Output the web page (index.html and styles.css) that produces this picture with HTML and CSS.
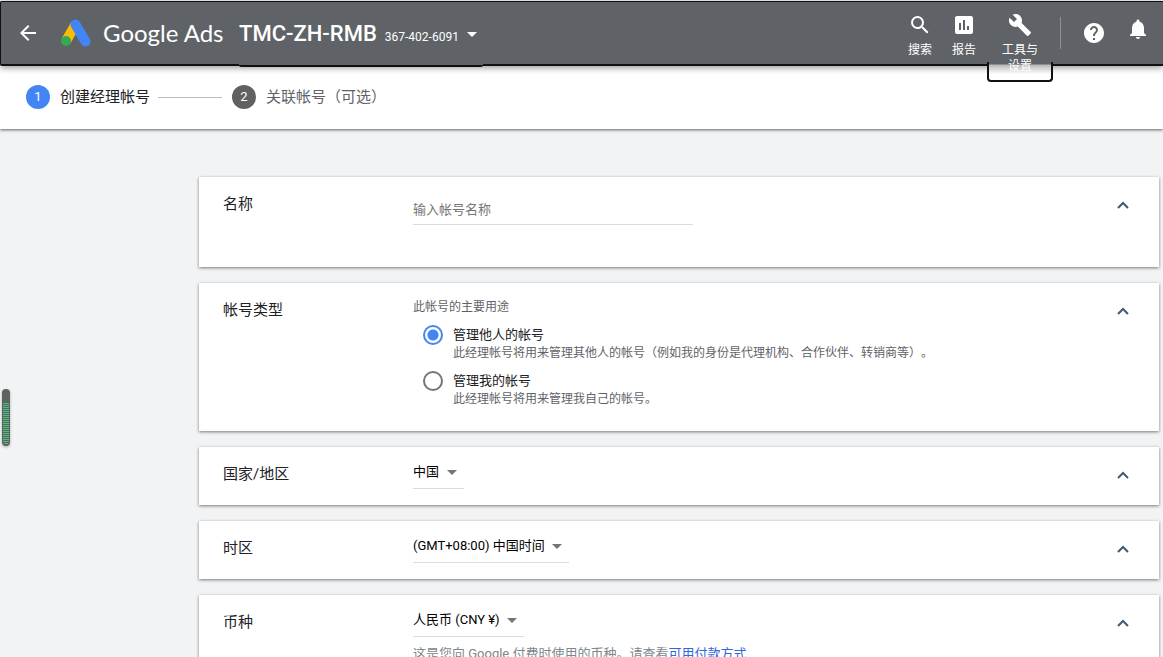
FILE: index.html
```html
<!DOCTYPE html>
<html lang="zh-CN">
<head>
<meta charset="utf-8">
<meta name="viewport" content="width=device-width, initial-scale=1">
<title>Google Ads</title>
<link rel="stylesheet" href="styles.css">
</head>
<body>
<div class="app">
  <header class="topbar">
    <button class="icon-button back" aria-label="返回">
      <svg width="24" height="24" viewBox="0 0 24 24"><path fill="currentColor" d="M20 11H7.800l5.600-5.600L12 4l-8 8 8 8 1.400-1.400L7.800 13H20z"/></svg>
    </button>
    <svg class="logo" width="32" height="28" viewBox="0 0 32 28" aria-hidden="true">
      <path d="M15.500 5.500L6 22" stroke="#fbbc04" stroke-width="10" fill="none"/>
      <path d="M15.500 5.500L25.500 22.500" stroke="#4285f4" stroke-width="10" stroke-linecap="round" fill="none"/>
      <circle cx="6" cy="22" r="5" fill="#34a853"/>
    </svg>
    <span class="brand">Google Ads</span>
    <button class="account">
      <span class="account-name">TMC-ZH-RMB</span>
      <span class="account-id">367-402-6091</span>
      <svg width="10" height="5" viewBox="0 0 10 5" aria-hidden="true"><path fill="currentColor" d="M0 0h10L5 5z"/></svg>
    </button>
    <nav class="tools">
      <button class="tool">
        <svg width="24" height="24" viewBox="0 0 24 24"><path fill="currentColor" d="M15.500 14h-.79l-.28-.27A6.470 6.470 0 0 0 16 9.500 6.500 6.500 0 1 0 9.500 16c1.610 0 3.090-.59 4.230-1.570l.27.28v.79l5 4.990L20.490 19l-4.990-5zm-6 0C7.010 14 5 11.990 5 9.500S7.010 5 9.500 5 14 7.010 14 9.500 11.990 14 9.500 14z"/></svg>
        <span>搜索</span>
      </button>
      <button class="tool">
        <svg width="24" height="24" viewBox="0 0 24 24"><path fill="currentColor" d="M19 3H5c-1.100 0-2 .9-2 2v14c0 1.100.9 2 2 2h14c1.100 0 2-.9 2-2V5c0-1.100-.9-2-2-2zM9 17H7v-7h2v7zm4 0h-2V7h2v10zm4 0h-2v-4h2v4z"/></svg>
        <span>报告</span>
      </button>
      <button class="tool tool-focused">
        <svg width="24" height="24" viewBox="0 0 24 24"><path fill="currentColor" d="M22.700 19l-9.100-9.100c.9-2.300.4-5-1.500-6.900-2-2-5-2.400-7.400-1.300L9 6 6 9 1.600 4.700C.4 7.100.9 10.100 2.900 12.100c1.900 1.900 4.600 2.400 6.900 1.500l9.100 9.100c.4.4 1 .4 1.400 0l2.300-2.300c.5-.4.5-1.100.1-1.400z"/></svg>
        <span>工具与<br>设置</span>
      </button>
    </nav>
    <span class="divider"></span>
    <button class="icon-button help" aria-label="帮助">
      <svg width="24" height="24" viewBox="0 0 24 24"><path fill="currentColor" d="M12 2C6.480 2 2 6.480 2 12s4.480 10 10 10 10-4.480 10-10S17.520 2 12 2zm1 17h-2v-2h2v2zm2.070-7.750l-.9.920C13.450 12.900 13 13.500 13 15h-2v-.5c0-1.100.45-2.100 1.170-2.830l1.240-1.260c.37-.36.59-.86.59-1.410 0-1.100-.9-2-2-2s-2 .9-2 2H8c0-2.210 1.790-4 4-4s4 1.790 4 4c0 .88-.36 1.680-.93 2.250z"/></svg>
    </button>
    <button class="icon-button bell" aria-label="通知">
      <svg width="24" height="24" viewBox="0 0 24 24"><path fill="currentColor" d="M12 22c1.100 0 2-.9 2-2h-4c0 1.100.9 2 2 2zm6-6v-5c0-3.070-1.640-5.640-4.500-6.320V4c0-.83-.67-1.500-1.500-1.500s-1.500.67-1.500 1.500v.68C7.630 5.360 6 7.920 6 11v5l-2 2v1h16v-1l-2-2z"/></svg>
    </button>
  </header>

  <ol class="steps">
    <li class="step step-current"><span class="step-number">1</span><span>创建经理帐号</span></li>
    <li class="step-line" aria-hidden="true"></li>
    <li class="step"><span class="step-number">2</span><span>关联帐号（可选）</span></li>
  </ol>

  <main class="content">
    <section class="card card-name">
      <h2 class="card-title"><label for="name">名称</label></h2>
      <div class="card-body">
        <input class="text-input" id="name" type="text" placeholder="输入帐号名称">
      </div>
      <button class="collapse" aria-label="收起"><svg width="12" height="8" viewBox="0 0 12 8"><path d="M1 7l5-5 5 5"/></svg></button>
    </section>

    <section class="card card-type">
      <h2 class="card-title">帐号类型</h2>
      <div class="card-body" role="radiogroup" aria-labelledby="purpose">
        <p class="caption" id="purpose">此帐号的主要用途</p>
        <label class="option">
          <input class="radio" type="radio" name="purpose" checked>
          <span class="option-text"><span class="option-title">管理他人的帐号</span><span class="option-desc">此经理帐号将用来管理其他人的帐号（例如我的身份是代理机构、合作伙伴、转销商等）。</span></span>
        </label>
        <label class="option">
          <input class="radio" type="radio" name="purpose">
          <span class="option-text"><span class="option-title">管理我的帐号</span><span class="option-desc">此经理帐号将用来管理我自己的帐号。</span></span>
        </label>
      </div>
      <button class="collapse" aria-label="收起"><svg width="12" height="8" viewBox="0 0 12 8"><path d="M1 7l5-5 5 5"/></svg></button>
    </section>

    <section class="card">
      <h2 class="card-title"><label for="country">国家/地区</label></h2>
      <div class="card-body">
        <div class="select-box">
          <select id="country"><option>中国</option></select>
          <svg class="caret" width="10" height="5" viewBox="0 0 10 5"><path d="M0 0h10L5 5z"/></svg>
        </div>
      </div>
      <button class="collapse" aria-label="收起"><svg width="12" height="8" viewBox="0 0 12 8"><path d="M1 7l5-5 5 5"/></svg></button>
    </section>

    <section class="card">
      <h2 class="card-title"><label for="zone">时区</label></h2>
      <div class="card-body">
        <div class="select-box">
          <select id="zone"><option>(GMT+08:00) 中国时间</option></select>
          <svg class="caret" width="10" height="5" viewBox="0 0 10 5"><path d="M0 0h10L5 5z"/></svg>
        </div>
      </div>
      <button class="collapse" aria-label="收起"><svg width="12" height="8" viewBox="0 0 12 8"><path d="M1 7l5-5 5 5"/></svg></button>
    </section>

    <section class="card">
      <h2 class="card-title"><label for="currency">币种</label></h2>
      <div class="card-body">
        <div class="select-box">
          <select id="currency"><option>人民币 (CNY ¥)</option></select>
          <svg class="caret" width="10" height="5" viewBox="0 0 10 5"><path d="M0 0h10L5 5z"/></svg>
        </div>
        <p class="hint">这是您向 Google 付费时使用的币种。请查看<a href="#">可用付款方式</a></p>
      </div>
      <button class="collapse" aria-label="收起"><svg width="12" height="8" viewBox="0 0 12 8"><path d="M1 7l5-5 5 5"/></svg></button>
    </section>
  </main>
  <div class="level-meter" aria-hidden="true"></div>
</div>
</body>
</html>
```

FILE: styles.css
```css
* {
  box-sizing: border-box;
}

body {
  margin: 0;
  background: #f1f3f4;
  color: #202124;
  font-family: Roboto, "Noto Sans CJK SC", sans-serif;
  font-size: 13px;
  text-spacing-trim: space-all;
}

button,
input,
select {
  font: inherit;
  color: inherit;
}

button {
  padding: 0;
  border: 0;
  background: none;
  cursor: pointer;
}

svg {
  display: block;
  flex: none;
}

h2,
p,
ol {
  margin: 0;
  padding: 0;
}

.app {
  position: relative;
  display: flex;
  flex-direction: column;
  height: 100vh;
  overflow: hidden;
}

/* Top bar */
.topbar {
  position: relative;
  z-index: 2;
  flex: none;
  display: flex;
  align-items: center;
  height: 65px;
  margin-top: 1px;
  padding: 0 13px 0 15px;
  border: 1px solid #111;
  border-bottom-width: 2px;
  border-right: 0;
  border-radius: 2px 0 0 2px;
  background: #5f6368;
  color: #fff;
  box-shadow: 0 2px 6px rgba(0, 0, 0, 0.4);
}

.logo {
  margin: 0 11px 0 20px;
}

.brand {
  width: 137px;
  font-family: Lato, sans-serif;
  font-size: 24px;
  line-height: 32px;
  white-space: nowrap;
}

.account {
  display: flex;
  align-items: center;
  align-self: stretch;
  gap: 8px;
  width: 244px;
  margin-left: -1px;
  margin-bottom: -3px;
  padding-top: 1px;
  border-bottom: 2px solid #111;
  border-radius: 2px;
  background: #5f6368;
}

.account-name {
  font-size: 22px;
  font-weight: 500;
  line-height: 32px;
}

.account-id {
  padding-top: 6px;
  font-size: 12px;
  line-height: 16px;
}

.tools {
  display: flex;
  align-self: stretch;
  margin-left: auto;
}

.tool {
  display: flex;
  flex-direction: column;
  align-items: center;
  gap: 5px;
  width: 44px;
  padding-top: 11px;
  font-size: 12px;
  line-height: 16px;
}

.tool-focused {
  position: relative;
  z-index: 0;
  width: 66px;
  height: 80px;
  margin-left: 1px;
}

/* Lower part of the focus ring, which hangs below the bar */
.tool-focused::after {
  content: "";
  position: absolute;
  z-index: -1;
  right: 0;
  bottom: 0;
  left: 0;
  height: 18px;
  border: 2px solid #111;
  border-top: 0;
  border-radius: 0 0 4px 4px;
  background: linear-gradient(#5f6368 2px, #b8b8b8 3px, #fff 12px);
}

.divider {
  width: 1px;
  height: 32px;
  margin-left: 7px;
  background: #8d9195;
}

.help {
  margin-left: 21px;
}

.bell {
  margin: 0 0 8px 20px;
}

/* Step indicator */
.steps {
  position: relative;
  z-index: 1;
  flex: none;
  display: flex;
  align-items: center;
  height: 63px;
  padding: 0 0 1px 26px;
  background: #fff;
  box-shadow: 0 1px 3px rgba(0, 0, 0, 0.6);
  list-style: none;
}

.step {
  display: flex;
  align-items: center;
  gap: 10px;
  color: #5f6368;
  font-size: 15px;
  line-height: 24px;
}

.step-current {
  color: #202124;
}

.step-number {
  width: 24px;
  height: 24px;
  border-radius: 50%;
  background: #616161;
  color: #fff;
  font-size: 13px;
  text-align: center;
}

.step-current .step-number {
  background: #4285f4;
}

.step-line {
  width: 64px;
  height: 1px;
  margin: 0 10px 0 8px;
  background: #bdbdbd;
}

/* Form cards */
.content {
  flex: 1;
  min-height: 0;
  display: flex;
  flex-direction: column;
  gap: 16px;
  padding: 48px 4px 0 199px;
}

.card {
  flex: none;
  display: flex;
  align-items: flex-start;
  padding: 14px 30px 16px 24px;
  background: #fff;
  box-shadow: 0 1px 3px rgba(0, 0, 0, 0.5);
}

.card-title {
  width: 190px;
  padding-top: 1px;
  font-size: 15px;
  font-weight: 400;
  line-height: 24px;
}

.card-body {
  flex: 1;
}

.collapse {
  padding: 10px 0 8px;
}

.collapse path {
  fill: none;
  stroke: #455a70;
  stroke-width: 2;
}

.text-input {
  display: block;
  width: 280px;
  height: 28px;
  margin: 6px 0 26px;
  padding: 0 0 2px;
  border: 0;
  border-bottom: 1px solid #dadce0;
  background: none;
  outline: 0;
}

.text-input::placeholder {
  color: #757575;
}

.card-type {
  padding-bottom: 22px;
}

.caption {
  margin-bottom: 10px;
  color: #5f6368;
  font-size: 12px;
  line-height: 20px;
}

.option {
  display: flex;
  gap: 10px;
  padding-left: 10px;
}

.option + .option {
  margin-top: 10px;
}

.radio {
  appearance: none;
  flex: none;
  width: 20px;
  height: 20px;
  margin: -2px 0 0;
  border: 2px solid #757575;
  border-radius: 50%;
}

.radio:checked {
  border-color: #4285f4;
  background: radial-gradient(circle, #4285f4 5px, transparent 6px);
}

.option-text {
  display: flex;
  flex-direction: column;
}

.option-title {
  line-height: 16px;
}

.option-desc {
  color: #5f6368;
  font-size: 12px;
  line-height: 20px;
}

.select-box {
  position: relative;
  display: inline-flex;
  border-bottom: 1px solid #dadce0;
  color: #000;
  vertical-align: top;
}

.select-box select {
  appearance: none;
  height: 27px;
  padding: 0 24px 6px 0;
  border: 0;
  background: none;
  outline: 0;
}

.caret {
  position: absolute;
  top: 9px;
  right: 7px;
  fill: #757575;
  pointer-events: none;
}

.hint {
  margin-top: 7px;
  color: #80868b;
  line-height: 20px;
}

.hint a {
  color: #3367d6;
  text-decoration: none;
}

/* Floating level meter on the window edge */
.level-meter {
  position: absolute;
  top: 389px;
  left: 2px;
  width: 8px;
  height: 57px;
  padding: 14px 1px 2px;
  border-radius: 4px;
  background: repeating-linear-gradient(#3fc47a 0 1px, #616161 1px 2px) content-box, #616161;
  box-shadow: 0 1px 3px rgba(0, 0, 0, 0.3);
}
```
